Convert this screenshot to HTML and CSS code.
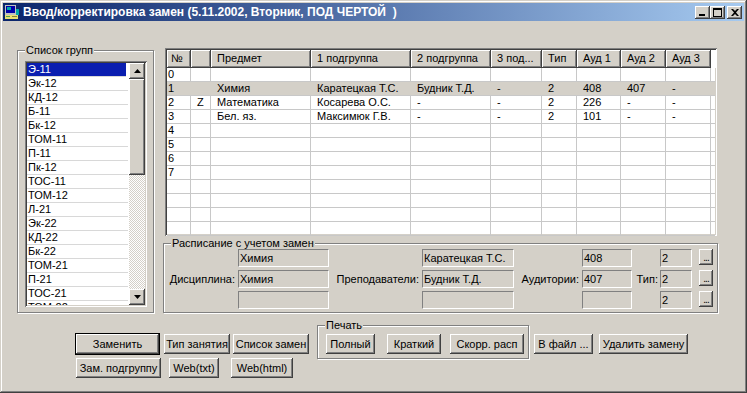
FILE: index.html
```html
<!DOCTYPE html>
<html lang="ru">
<head>
    <meta charset="UTF-8">
    <title>Ввод/корректировка замен</title>
    <link rel="stylesheet" href="styles.css">
</head>
<body>
<div id="wnd">
    <div class="caption">
        <svg class="app-icon" width="16" height="16" viewBox="0 0 16 16">
            <rect x="1" y="1" width="11" height="10" fill="#c0c0c0"/>
            <rect x="2" y="2" width="9" height="7" fill="#0000a8"/>
            <rect x="3" y="3" width="4" height="3" fill="#00a8a8"/>
            <rect x="1" y="11" width="13" height="4" fill="#e8e070"/>
            <rect x="2" y="12" width="4" height="1" fill="#50a050"/>
            <rect x="8" y="12" width="5" height="1" fill="#808040"/>
            <rect x="12" y="5" width="3" height="6" fill="#00a8a8"/>
        </svg>
        <span class="caption-text">Ввод/корректировка замен (5.11.2002, Вторник, ПОД ЧЕРТОЙ&nbsp; )</span>
        <div class="caption-btns">
            <span class="cbtn"><svg width="8" height="7"><rect x="0" y="5" width="6" height="2" fill="#000"/></svg></span>
            <span class="cbtn"><svg width="9" height="9"><path d="M0 0h9v9H0z M1 2v6h7V2z" fill="#000" fill-rule="evenodd"/></svg></span>
            <span class="cbtn close"><svg width="8" height="7"><path d="M0 0h2l2 2 2-2h2L5 3.5 8 7H6L4 5 2 7H0l3-3.5z" fill="#000"/></svg></span>
        </div>
    </div>

    <div class="client">
        <div class="top">
            <div class="group groups">
                <div class="group-title">Список групп</div>
                <div class="listbox">
                    <div class="items">
                        <div class="item sel">Э-11</div>
                        <div class="item">Эк-12</div>
                        <div class="item">КД-12</div>
                        <div class="item">Б-11</div>
                        <div class="item">Бк-12</div>
                        <div class="item">ТОМ-11</div>
                        <div class="item">П-11</div>
                        <div class="item">Пк-12</div>
                        <div class="item">ТОС-11</div>
                        <div class="item">ТОМ-12</div>
                        <div class="item">Л-21</div>
                        <div class="item">Эк-22</div>
                        <div class="item">КД-22</div>
                        <div class="item">Бк-22</div>
                        <div class="item">ТОМ-21</div>
                        <div class="item">П-21</div>
                        <div class="item">ТОС-21</div>
                        <div class="item">ТОМ-22</div>
                    </div>
                    <div class="vscroll">
                        <div class="sbtn"><svg width="7" height="4"><path d="M3.5 0L7 4H0z" fill="#000"/></svg></div>
                        <div class="thumb"></div>
                        <div class="track"></div>
                        <div class="sbtn"><svg width="7" height="4"><path d="M0 0h7L3.5 4z" fill="#000"/></svg></div>
                    </div>
                </div>
            </div>

            <div class="right">
                <div class="grid">
                    <div class="row head">
                        <span>№</span><span></span><span>Предмет</span><span>1 подгруппа</span><span>2 подгруппа</span><span>3 под...</span><span>Тип</span><span>Ауд 1</span><span>Ауд 2</span><span>Ауд 3</span><span></span>
                    </div>
                    <div class="row"><span>0</span><span></span><span></span><span></span><span></span><span></span><span></span><span></span><span></span><span></span><span></span></div>
                    <div class="row cur"><span>1</span><span></span><span>Химия</span><span>Каратецкая Т.С.</span><span>Будник Т.Д.</span><span>-</span><span>2</span><span>408</span><span>407</span><span>-</span><span></span></div>
                    <div class="row"><span>2</span><span>Z</span><span>Математика</span><span>Косарева О.С.</span><span>-</span><span>-</span><span>2</span><span>226</span><span>-</span><span>-</span><span></span></div>
                    <div class="row"><span>3</span><span></span><span>Бел. яз.</span><span>Максимюк Г.В.</span><span>-</span><span>-</span><span>2</span><span>101</span><span>-</span><span>-</span><span></span></div>
                    <div class="row"><span>4</span><span></span><span></span><span></span><span></span><span></span><span></span><span></span><span></span><span></span><span></span></div>
                    <div class="row"><span>5</span><span></span><span></span><span></span><span></span><span></span><span></span><span></span><span></span><span></span><span></span></div>
                    <div class="row"><span>6</span><span></span><span></span><span></span><span></span><span></span><span></span><span></span><span></span><span></span><span></span></div>
                    <div class="row"><span>7</span><span></span><span></span><span></span><span></span><span></span><span></span><span></span><span></span><span></span><span></span></div>
                    <div class="row"><span></span><span></span><span></span><span></span><span></span><span></span><span></span><span></span><span></span><span></span><span></span></div>
                    <div class="row"><span></span><span></span><span></span><span></span><span></span><span></span><span></span><span></span><span></span><span></span><span></span></div>
                    <div class="row"><span></span><span></span><span></span><span></span><span></span><span></span><span></span><span></span><span></span><span></span><span></span></div>
                    <div class="row"><span></span><span></span><span></span><span></span><span></span><span></span><span></span><span></span><span></span><span></span><span></span></div>
                </div>

                <div class="group sched">
                    <div class="group-title">Расписание с учетом замен</div>
                    <div class="sched-grid">
                        <div class="fld c2 r1">Химия</div>
                        <div class="fld c4 r1">Каратецкая Т.С.</div>
                        <div class="fld c6 r1">408</div>
                        <div class="fld c8 r1">2</div>
                        <button class="dots c9 r1">...</button>

                        <div class="lbl c1 r2">Дисциплина:</div>
                        <div class="fld c2 r2">Химия</div>
                        <div class="lbl c3 r2">Преподаватели:</div>
                        <div class="fld c4 r2">Будник Т.Д.</div>
                        <div class="lbl c5 r2">Аудитории:</div>
                        <div class="fld c6 r2">407</div>
                        <div class="lbl c7 r2">Тип:</div>
                        <div class="fld c8 r2">2</div>
                        <button class="dots c9 r2">...</button>

                        <div class="fld c2 r3"></div>
                        <div class="fld c4 r3"></div>
                        <div class="fld c6 r3"></div>
                        <div class="fld c8 r3">2</div>
                        <button class="dots c9 r3">...</button>
                    </div>
                </div>
            </div>
        </div>

        <div class="bottom">
            <div class="cmds">
                <div class="cmd-row">
                    <button class="btn default w-replace">Заменить</button>
                    <button class="btn w-type">Тип занятия</button>
                    <button class="btn w-list">Список замен</button>
                </div>
                <div class="cmd-row second">
                    <button class="btn w-sub">Зам. подгруппу</button>
                    <button class="btn w-txt">Web(txt)</button>
                    <button class="btn w-html">Web(html)</button>
                </div>
            </div>
            <div class="group print">
                <div class="group-title">Печать</div>
                <div class="print-row">
                    <button class="btn w-full">Полный</button>
                    <button class="btn w-short">Краткий</button>
                    <button class="btn w-corr">Скорр. расп</button>
                </div>
            </div>
            <button class="btn side w-file">В файл ...</button>
            <button class="btn side w-del">Удалить замену</button>
        </div>
    </div>
</div>
</body>
</html>
```

FILE: styles.css
```css
body {
    margin: 0;
    font-family: "Liberation Sans", Arial, sans-serif;
    font-size: 11px;
    color: #000;
    background: #d4d0c8;
}
button {
    font: inherit;
    color: #000;
    border: 0;
    padding: 0;
    margin: 0;
}
#wnd {
    width: 747px;
    height: 393px;
    box-sizing: border-box;
    padding: 3px;
    background: #d4d0c8;
    box-shadow: inset -1px -1px #404040, inset 1px 1px #d4d0c8, inset -2px -2px #808080, inset 2px 2px #fff;
}

/* заголовок окна */
.caption {
    height: 18px;
    display: flex;
    align-items: center;
    background: linear-gradient(to right, #0a246a, #a6caf0);
    color: #fff;
    font-weight: bold;
    font-size: 12px;
}
.app-icon {
    margin: 0 3px 0 1px;
    flex: none;
}
.caption-text {
    flex: 1;
    white-space: nowrap;
}
.caption-btns {
    display: flex;
    margin-right: 2px;
}
.cbtn {
    width: 15px;
    height: 13px;
    box-sizing: border-box;
    display: flex;
    align-items: center;
    justify-content: center;
    background: #d4d0c8;
    box-shadow: inset -1px -1px #404040, inset 1px 1px #fff, inset -2px -2px #808080;
}
.cbtn.close {
    margin-left: 2px;
}

/* рамки групп */
.group {
    border: 1px solid #808080;
    box-shadow: inset 1px 1px #fff, 1px 1px #fff;
    box-sizing: border-box;
}
.group-title {
    width: fit-content;
    height: 14px;
    line-height: 14px;
    margin: -8px 0 0 7px;
    padding: 0 1px;
    background: #d4d0c8;
    white-space: nowrap;
}

.top {
    display: flex;
    align-items: flex-start;
    padding-top: 27px;
}

/* список групп */
.groups {
    width: 137px;
    height: 263px;
    margin: 2px 0 0 14px;
}
.listbox {
    display: flex;
    width: 122px;
    height: 246px;
    margin: 4px 0 0 7px;
    box-sizing: border-box;
    padding: 2px;
    background: #fff;
    box-shadow: inset 1px 1px #808080, inset -1px -1px #fff, inset 2px 2px #404040, inset -2px -2px #d4d0c8;
}
.items {
    flex: 1;
    overflow: hidden;
}
.item {
    height: 14px;
    line-height: 13px;
    box-sizing: border-box;
    border-bottom: 1px solid #d8d8d8;
    padding-left: 1px;
    margin-right: 1px;
    white-space: nowrap;
}
.item.sel {
    background: #0a1eb0;
    color: #fff;
    margin-right: 3px;
}
.vscroll {
    width: 16px;
    display: flex;
    flex-direction: column;
}
.sbtn,
.thumb {
    background: #d4d0c8;
    box-shadow: inset -1px -1px #404040, inset 1px 1px #fff, inset -2px -2px #808080;
}
.sbtn {
    height: 16px;
    display: flex;
    align-items: center;
    justify-content: center;
}
.thumb {
    height: 96px;
}
.track {
    flex: 1;
    background-color: #d4d0c8;
    background-image: conic-gradient(#fff 25%, #d4d0c8 0 50%, #fff 0 75%, #d4d0c8 0);
    background-size: 2px 2px;
}

/* таблица замен */
.right {
    margin-left: 9px;
}
.grid {
    width: 552px;
    height: 188px;
    margin-left: 2px;
    box-sizing: border-box;
    padding: 2px;
    background: #fff;
    overflow: hidden;
    box-shadow: inset 1px 1px #808080, inset -1px -1px #fff, inset 2px 2px #404040, inset -2px -2px #d4d0c8;
}
.row {
    display: grid;
    grid-template-columns: 24px 20px 100px 100px 80px 51px 35px 44px 45px 45px 1fr;
    height: 14px;
    box-sizing: border-box;
    border-bottom: 1px solid #c8c8c8;
}
.row > span {
    border-right: 1px solid #c8c8c8;
    padding-left: 6px;
    line-height: 13px;
    white-space: nowrap;
    overflow: hidden;
}
.row > span:first-child {
    padding-left: 1px;
}
.row > span:last-child {
    border-right: 0;
}
.row.cur {
    background: #d4d0c8;
}
.row.cur > span {
    border-right-color: #d4d0c8;
}
.row.head {
    height: 18px;
    border-bottom: 0;
}
.row.head > span {
    background: #d4d0c8;
    border-right: 1px solid #404040;
    border-bottom: 1px solid #404040;
    box-shadow: inset 1px 1px #fff, inset -1px -1px #808080;
    line-height: 17px;
}
.row.head > span:first-child {
    padding-left: 4px;
}
.row.head > span:last-child {
    background: #fff;
    border: 0;
    box-shadow: none;
}

/* расписание с учетом замен */
.sched {
    width: 555px;
    height: 70px;
    margin-top: 7px;
}
.sched-grid {
    display: grid;
    grid-template-columns: 74px 91px 93px 92px 68px 50px 28px 32px 21px;
    grid-template-rows: 18px 18px 18px;
    row-gap: 3px;
    margin-top: -1px;
}
.c1 { grid-column: 1; }
.c2 { grid-column: 2; }
.c3 { grid-column: 3; }
.c4 { grid-column: 4; }
.c5 { grid-column: 5; }
.c6 { grid-column: 6; }
.c7 { grid-column: 7; }
.c8 { grid-column: 8; }
.c9 { grid-column: 9; }
.r1 { grid-row: 1; }
.r2 { grid-row: 2; }
.r3 { grid-row: 3; }
.lbl {
    align-self: center;
    text-align: right;
    padding-right: 3px;
    white-space: nowrap;
}
.c7.lbl {
    padding-right: 2px;
}
.fld {
    box-sizing: border-box;
    border: 1px solid;
    border-color: #808080 #fff #fff #808080;
    padding: 2px 0 0 1px;
    line-height: 13px;
    white-space: nowrap;
    overflow: hidden;
}
.dots {
    width: 14px;
    height: 16px;
    margin-left: 7px;
    background: #d4d0c8;
    box-shadow: inset -1px -1px #404040, inset 1px 1px #fff, inset -2px -2px #808080;
    line-height: 18px;
    font-size: 10px;
    letter-spacing: -1px;
}

/* кнопки */
.btn {
    height: 20px;
    box-sizing: border-box;
    background: #d4d0c8;
    box-shadow: inset -1px -1px #404040, inset 1px 1px #fff, inset -2px -2px #808080;
    line-height: 19px;
    text-align: center;
    white-space: nowrap;
    overflow: visible;
}
.btn.default {
    outline: 1px solid #000;
}
.bottom {
    display: flex;
    align-items: flex-start;
    margin-top: 12px;
    padding-left: 73px;
}
.cmds {
    padding-top: 9px;
    width: 233px;
}
.cmd-row {
    display: flex;
}
.cmd-row.second {
    margin-top: 4px;
}
.w-replace { width: 83px; }
.w-type { width: 66px; margin-left: 5px; }
.w-list { width: 76px; margin-left: 3px; }
.w-sub { width: 85px; }
.w-txt { width: 50px; margin-left: 8px; }
.w-html { width: 62px; margin-left: 12px; }
.print {
    width: 212px;
    height: 34px;
    margin-left: 8px;
}
.print-row {
    display: flex;
    margin-top: 2px;
}
.w-full { width: 49px; margin-left: 8px; }
.w-short { width: 54px; margin-left: 12px; }
.w-corr { width: 74px; margin-left: 9px; }
.side {
    margin-top: 9px;
}
.w-file { width: 59px; margin-left: 5px; }
.w-del { width: 89px; margin-left: 6px; }
```
